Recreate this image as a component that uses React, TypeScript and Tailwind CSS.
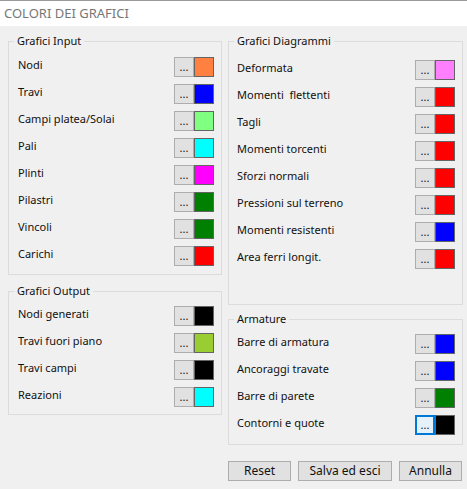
import React from 'react'

type Entry = { label: string; color: string; focused?: boolean }

const input: Entry[] = [
  { label: 'Nodi', color: '#ff8040' },
  { label: 'Travi', color: '#0000ff' },
  { label: 'Campi platea/Solai', color: '#80ff80' },
  { label: 'Pali', color: '#00ffff' },
  { label: 'Plinti', color: '#ff00ff' },
  { label: 'Pilastri', color: '#008000' },
  { label: 'Vincoli', color: '#008000' },
  { label: 'Carichi', color: '#ff0000' },
]

const output: Entry[] = [
  { label: 'Nodi generati', color: '#000000' },
  { label: 'Travi fuori piano', color: '#9acd32' },
  { label: 'Travi campi', color: '#000000' },
  { label: 'Reazioni', color: '#00ffff' },
]

const diagrammi: Entry[] = [
  { label: 'Deformata', color: '#ff80ff' },
  { label: 'Momenti  flettenti', color: '#ff0000' },
  { label: 'Tagli', color: '#ff0000' },
  { label: 'Momenti torcenti', color: '#ff0000' },
  { label: 'Sforzi normali', color: '#ff0000' },
  { label: 'Pressioni sul terreno', color: '#ff0000' },
  { label: 'Momenti resistenti', color: '#0000ff' },
  { label: 'Area ferri longit.', color: '#ff0000' },
]

const armature: Entry[] = [
  { label: 'Barre di armatura', color: '#0000ff' },
  { label: 'Ancoraggi travate', color: '#0000ff' },
  { label: 'Barre di parete', color: '#008000' },
  { label: 'Contorni e quote', color: '#000000', focused: true },
]

const ColorRow: React.FC<{ entry: Entry }> = ({ entry }) => (
  <div className="flex items-center h-5">
    <span className="flex-1 pb-1 whitespace-pre">{entry.label}</span>
    <button
      className={
        entry.focused
          ? 'w-[20px] h-5 bg-[#e5f1fb] border-2 border-[#0078d7] flex items-end justify-center leading-none pb-[3px] text-[11px]'
          : 'w-[20px] h-5 bg-[#e1e1e1] border border-[#adadad] flex items-end justify-center leading-none pb-[4px] text-[11px]'
      }
    >
      ...
    </button>
    <div className="w-5 h-5 border border-[#646464]" style={{ backgroundColor: entry.color }} />
  </div>
)

const GroupBox: React.FC<{
  title: string
  entries: Entry[]
  className?: string
  rowsClass: string
}> = ({ title, entries, className, rowsClass }) => (
  <div className={'border border-[#dcdcdc] ' + (className ?? '')}>
    <div className="-mt-[9px] ml-[5px] h-4 leading-4 px-[3px] w-fit bg-[#f0f0f0]">{title}</div>
    <div className={'flex flex-col gap-[7px] ' + rowsClass}>
      {entries.map((e) => (
        <ColorRow key={e.label} entry={e} />
      ))}
    </div>
  </div>
)

export default function App() {
  return (
    <div
      className="w-[467px] h-[489px] bg-[#f0f0f0] text-[11px] text-[#111111] flex flex-col"
      style={{ fontFamily: '"Noto Sans", "Open Sans", sans-serif' }}
    >
      <div className="h-[26px] bg-white border-t border-[#9a9a9a] pl-[4px] flex items-center text-[13px] text-[#777777]">
        COLORI DEI GRAFICI
      </div>
      <div className="flex gap-[6px] pl-[8px] pt-[15px]">
        <div className="w-[214px] flex flex-col gap-4">
          <GroupBox title="Grafici Input" entries={input} rowsClass="mt-[8px] pl-[9px] pr-[7px] pb-[8px]" />
          <GroupBox title="Grafici Output" entries={output} rowsClass="mt-[7px] pl-[9px] pr-[7px] pb-[7px]" />
        </div>
        <div className="w-[235px] flex flex-col">
          <GroupBox title="Grafici Diagrammi" entries={diagrammi} className="h-[264px]" rowsClass="mt-[11px] pl-[8px] pr-[7px]" />
          <GroupBox title="Armature" entries={armature} className="mt-[14px]" rowsClass="mt-[7px] pl-[8px] pr-[7px] pb-[9px]" />
          <div className="flex gap-[7px] mt-4 text-[12px]">
            <button className="w-[63px] h-5 bg-[#e1e1e1] border border-[#adadad] leading-none">Reset</button>
            <button className="w-[94px] h-5 bg-[#e1e1e1] border border-[#adadad] leading-none">Salva ed esci</button>
            <button className="w-[63px] h-5 bg-[#e1e1e1] border border-[#adadad] leading-none">Annulla</button>
          </div>
        </div>
      </div>
    </div>
  )
}
